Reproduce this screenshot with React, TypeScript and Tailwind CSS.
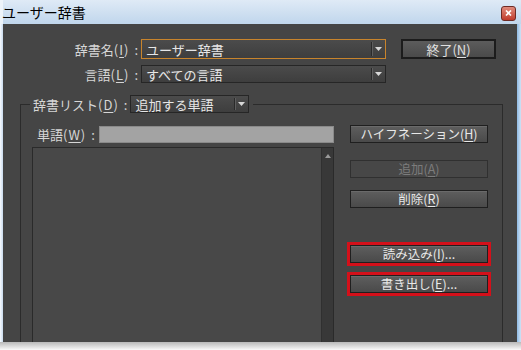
import type { ReactNode } from "react";

const font = { fontFamily: '"Noto Sans CJK JP", "Noto Sans", sans-serif' };

const Arrow = () => (
  <svg width="7" height="4" viewBox="0 0 7 4">
    <path d="M0 0 H7 L3.5 4 Z" fill="#d8d8d8" />
  </svg>
);

interface ComboProps {
  children: ReactNode;
  className: string;
  focused?: boolean;
}
const Combo = ({ children, className, focused }: ComboProps) => (
  <div
    className={`flex items-stretch border bg-gradient-to-b from-[#4b4b4b] to-[#3e3e3e] text-[#e6e6e6] ${
      focused ? "border-[#c8842c]" : "border-[#262626]"
    } ${className}`}
  >
    <div className="flex-1 flex items-center pl-[4px] leading-none">{children}</div>
    <div className="w-[14px] flex items-center justify-center border-l border-[#2a2a2a] shadow-[inset_1px_0_0_#5e5e5e] my-[2px]">
      <Arrow />
    </div>
  </div>
);

interface BtnProps {
  children: ReactNode;
  disabled?: boolean;
  marked?: boolean;
  className?: string;
}
const Btn = ({ children, disabled, marked, className = "" }: BtnProps) => {
  const inner = (
    <div
      className={`h-[18px] w-[138px] flex items-center justify-center leading-none text-[12.5px] border ${
        disabled
          ? "border-[#303030] bg-[#474747] text-[#7c7c7c]"
          : "border-[#1f1f1f] bg-gradient-to-b from-[#5e5e5e] to-[#4a4a4a] text-[#e8e8e8] shadow-[inset_0_1px_0_#6a6a6a]"
      }`}
    >
      {children}
    </div>
  );
  if (!marked) return <div className={className}>{inner}</div>;
  return (
    <div className={`-ml-[3px] w-[144px] border-[3px] border-[#d4101a] ${className}`}>
      {inner}
    </div>
  );
};

const U = ({ children }: { children: ReactNode }) => (
  <u className="underline-offset-2">{children}</u>
);

// label like 辞書名(I) :
const Label = ({ text, k }: { text: string; k: string }) => (
  <>
    {text}
    <span className="tracking-[1px]">
      (<U>{k}</U>)
    </span>
    <span className="ml-[5px]">:</span>
  </>
);

export default function App() {
  return (
    <div className="w-[521px] h-[350px] flex flex-col bg-[#f4f4f4] text-[13px] overflow-hidden" style={font}>
      {/* title bar */}
      <div className="h-[24px] flex items-center justify-between bg-gradient-to-b from-[#dfeaf6] to-[#c0d6ec] border-l-[3px] border-[#eef4fa] pr-[5px]">
        <span className="text-black text-[14px] leading-none -ml-[1px] mt-[-1px]">ユーザー辞書</span>
        <div className="w-[15px] h-[15px] mt-[2px] rounded-[3px] border border-[#6e2a24] bg-gradient-to-b from-[#e08a7c] to-[#c0392b] flex items-center justify-center">
          <svg width="7" height="6" viewBox="0 0 7 6">
            <path d="M1 0.5 L6 5.5 M6 0.5 L1 5.5" stroke="#fff" strokeWidth="1.6" />
          </svg>
        </div>
      </div>

      <div className="flex flex-1 min-h-0">
        <div className="w-[3px] bg-gradient-to-r from-[#f8fbfe] to-[#c9dbee]" />
        {/* body */}
        <div className="flex-1 min-h-0 bg-[#454545] text-[#d6d6d6] pt-[15px] overflow-hidden">
          <div className="flex items-center">
            <div className="w-[138px] text-right pr-[3px] leading-none">
              <Label text="辞書名" k="I" />
            </div>
            <Combo focused className="w-[245px] h-[20px]">
              ユーザー辞書
            </Combo>
            <div className="ml-[15px] w-[95px] h-[20px] flex items-center justify-center border-2 border-[#1c1c1c] bg-gradient-to-b from-[#5c5c5c] to-[#4a4a4a] text-[#e0e0e0] leading-none">
              終了(<U>N</U>)
            </div>
          </div>
          <div className="flex items-center mt-[6px]">
            <div className="w-[138px] text-right pr-[3px] leading-none">
              <Label text="言語" k="L" />
            </div>
            <Combo className="w-[245px] h-[18px]">すべての言語</Combo>
          </div>

          {/* group box */}
          <div className="ml-[17px] mt-[12px] w-[483px]">
            <div className="flex items-stretch h-[18px]">
              <div className="w-[10px] flex flex-col">
                <div className="h-[9px]" />
                <div className="flex-1 border-t border-l border-[#2b2b2b]" />
              </div>
              <div className="ml-[3px] flex items-center leading-none">
                <Label text="辞書リスト" k="D" />
              </div>
              <Combo className="ml-[3px] w-[119px] h-[18px]">追加する単語</Combo>
              <div className="flex-1 ml-[4px] flex flex-col">
                <div className="h-[9px]" />
                <div className="flex-1 border-t border-r border-[#2b2b2b]" />
              </div>
            </div>

            <div className="h-[240px] border-l border-r border-[#2b2b2b] flex pl-[11px] pt-[12px]">
              <div className="w-[302px] flex flex-col">
                <div className="flex items-center h-[18px] mt-[1px]">
                  <span className="w-[67px] pl-[5px] leading-none">
                    <Label text="単語" k="W" />
                  </span>
                  <div className="flex-1 h-[17px] bg-[#a3a3a3] border border-[#8a8a8a]" />
                </div>
                <div className="mt-[4px] h-[220px] flex border border-[#2a2a2a] bg-[#484848]">
                  <div className="flex-1" />
                  <div className="w-[12px] bg-[#383838] border-l border-[#303030] flex justify-center pt-[6px]">
                    <svg width="6" height="4" viewBox="0 0 6 4">
                      <path d="M0 4 H6 L3 0 Z" fill="#9a9a9a" />
                    </svg>
                  </div>
                </div>
              </div>

              <div className="ml-[16px] flex flex-col">
                <Btn>
                  ハイフネーション(<U>H</U>)
                </Btn>
                <Btn disabled className="mt-[17px]">
                  追加(<U>A</U>)
                </Btn>
                <Btn className="mt-[12px]">
                  削除(<U>R</U>)
                </Btn>
                <Btn marked className="mt-[34px]">
                  読み込み(<U>I</U>)...
                </Btn>
                <Btn marked className="mt-[6px]">
                  書き出し(<U>E</U>)...
                </Btn>
              </div>
            </div>
          </div>
        </div>
        <div className="w-[4px] bg-gradient-to-r from-[#8fbbe4] to-[#cfe2f4]" />
      </div>
      {/* bottom edge */}
      <div className="h-[8px] bg-gradient-to-b from-[#b9b9b9] to-[#fafafa]" />
    </div>
  );
}
